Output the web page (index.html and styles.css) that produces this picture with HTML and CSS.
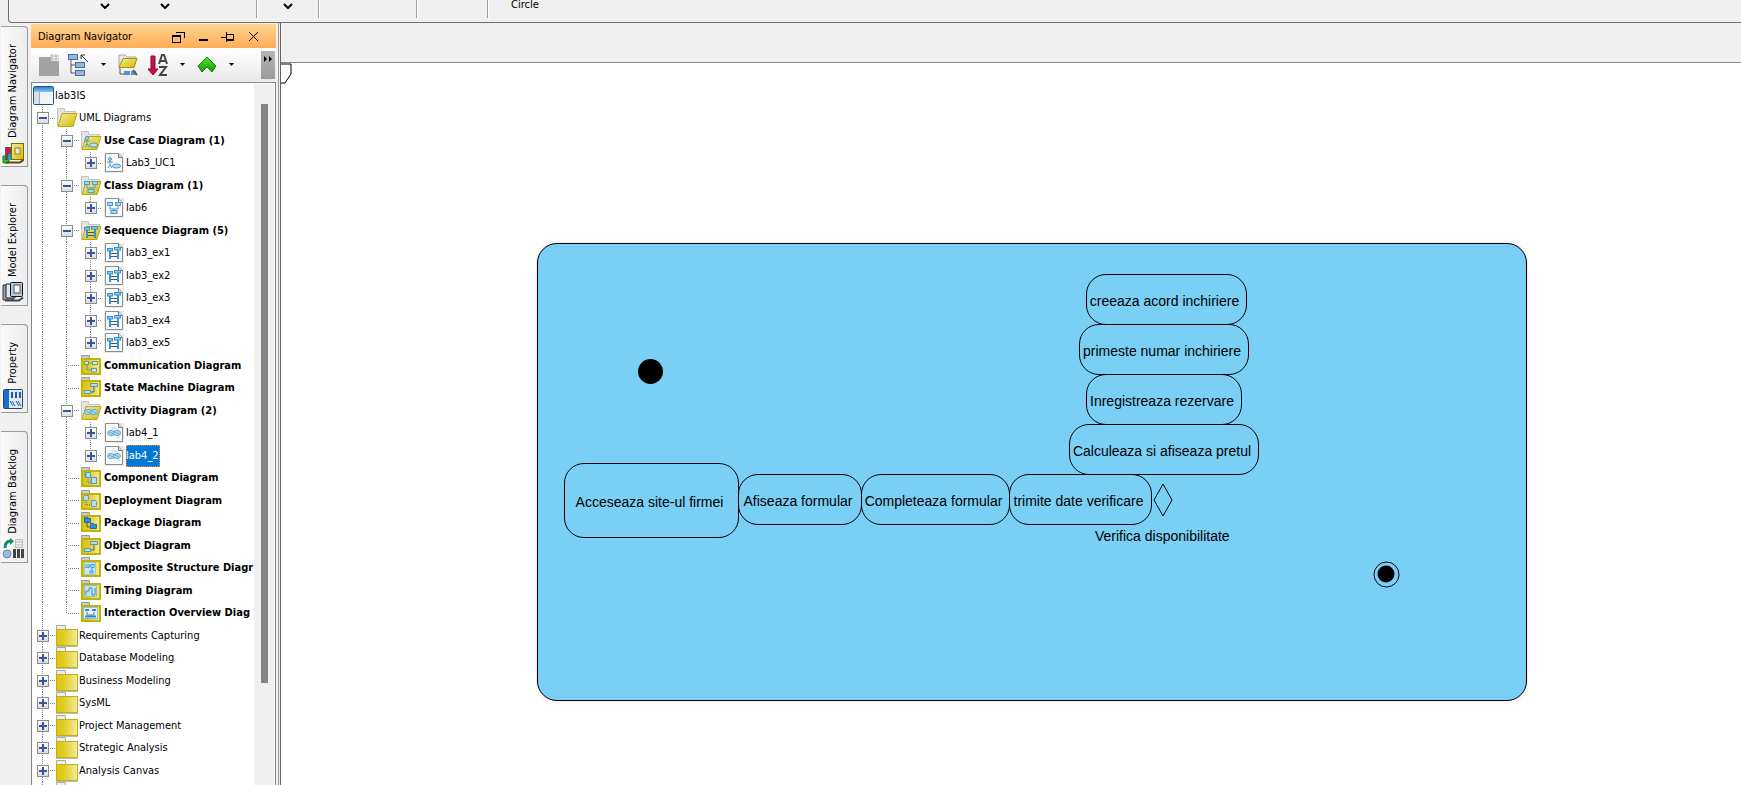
FILE: index.html
```html
<!DOCTYPE html>
<html lang="en">
<head>
<meta charset="utf-8">
<title>Diagram Navigator</title>
<link rel="stylesheet" href="styles.css">
</head>
<body>
<svg class="defs" aria-hidden="true">
  <defs>
    <linearGradient id="gold" x1="0" x2="1"><stop offset="0" stop-color="#dcc60f"/><stop offset=".35" stop-color="#e0cc22"/><stop offset="1" stop-color="#f3eaa0"/></linearGradient>
    <linearGradient id="gold2" x1="0" x2="1" y1="0" y2="1"><stop offset="0" stop-color="#f4eda0"/><stop offset="1" stop-color="#d2ba00"/></linearGradient>
    <linearGradient id="blue" x1="0" x2="0" y1="0" y2="1"><stop offset="0" stop-color="#2f7fd6"/><stop offset="1" stop-color="#8cc4f5"/></linearGradient>
    <linearGradient id="leaf" x1="0" x2="0" y1="0" y2="1"><stop offset="0" stop-color="#5be02c"/><stop offset="1" stop-color="#189a08"/></linearGradient>
    <symbol id="project" viewBox="0 0 24 22"><rect x="2.500" y="1.500" width="20" height="18" rx="1" fill="#fff" stroke="#1f567f"/><rect x="3" y="2" width="19" height="5" fill="url(#blue)"/><rect x="3" y="7" width="5" height="12" fill="#d5e2ea"/><path d="M8.500 7v12" stroke="#9ab"/><rect x="9" y="7" width="13" height="12" fill="#f1f3f5"/></symbol>
    <symbol id="closed" viewBox="0 0 24 22"><path d="M1.500 5V.500h9V4" fill="#eee" stroke="#aaa"/><rect x="1.500" y="4.500" width="21" height="16" fill="url(#gold)" stroke="#c0b010"/><path d="M1 21.500h22" stroke="#bbb"/></symbol>
    <symbol id="open" viewBox="0 0 24 22"><path d="M2.500 19V1.500h7v3h11V8" fill="#e4e4e4" stroke="#c4c4c4"/><path d="M7 6.500h15l-4 13H3z" fill="url(#gold2)" stroke="#b8a60c"/></symbol>
    <symbol id="sub" viewBox="0 0 24 22"><path d="M2.500 4V.500h8V4" fill="#ccc" stroke="#999"/><rect x="3" y="4" width="18" height="15" fill="url(#gold)" stroke="#c5b300" stroke-width="2"/></symbol>
    <symbol id="page" viewBox="0 0 24 22"><rect x="2" y="1" width="20" height="20" fill="#e9e9e9"/><path d="M3.500 1.500h13l4 4v14h-17z" fill="#f7f9fb" stroke="#8d8d8d"/><path d="M16.500 1.500v4h4" fill="#ddd" stroke="#777"/></symbol>
    <symbol id="usecase" viewBox="-5 -6 24 22"><g fill="#bfe0f3" stroke="#4899c8"><circle cx="3" cy="2" r="1.500"/><path d="M3 4v4M0 5h6M3 8l-2 3M3 8l2 3" fill="none"/><ellipse cx="9.500" cy="9" rx="4" ry="2"/></g></symbol>
    <symbol id="class" viewBox="-5 -6 24 22"><g fill="#a9d8f2" stroke="#4c9cca"><path d="M3 4v3h8V4M7 7v2" fill="none"/><rect x=".500" y=".500" width="5" height="3"/><rect x="8.500" y=".500" width="5" height="3"/><rect x="4" y="8.500" width="6" height="3"/></g></symbol>
    <symbol id="sequence" viewBox="-5 -6 24 22"><g fill="#8acbf0" stroke="#3893cd"><rect x=".500" y="1.500" width="5" height="2.500"/><rect x="7.500" y=".500" width="6" height="2.500"/><path d="M3 4v8M11 3v9" stroke-width="2"/><path d="M4 6.500h6M4 9.500h6" stroke="#456"/></g></symbol>
    <symbol id="activity" viewBox="-5 -6 24 22"><path d="M5 1h4l3 3M10 10h3" stroke="#ccc" fill="none"/><g fill="#b6dff4" stroke="#5aa7d2"><ellipse cx="4" cy="6" rx="3.500" ry="2.500"/><ellipse cx="10" cy="6" rx="3.500" ry="2.500"/><path d="M2 5l6 3M6 4l6 3"/></g></symbol>
    <symbol id="comm" viewBox="-5 -6 24 22"><g fill="#d9edc0" stroke="#5d9ca8"><path d="M3 3v6h5M5 2h4" fill="none"/><rect x=".500" y=".500" width="4" height="3"/><rect x="8.500" y=".500" width="5" height="3"/><rect x="7.500" y="7.500" width="5" height="3.500"/></g></symbol>
    <symbol id="link" viewBox="-5 -6 24 22"><g fill="#b9dceb" stroke="#5a9db9"><path d="M6 9h4V3" fill="none" stroke="#467"/><rect x="6.500" y=".500" width="7" height="3"/><rect x=".500" y="7.500" width="6" height="3"/></g></symbol>
    <symbol id="component" viewBox="-5 -6 24 22"><g fill="#b7e0f5" stroke="#4f9ccb"><path d="M4 6v4h4" fill="none"/><rect x="1.500" y="-.500" width="5" height="5"/><path d="M0 1h3M0 3h3M6 7h3M6 9h3"/><rect x="7.500" y="4.500" width="5" height="6"/></g></symbol>
    <symbol id="deployment" viewBox="-5 -6 24 22"><g fill="#b7def5" stroke="#5aa1c9"><path d="M-.500.500l1-1h4v4l-1 1h-4z"/><path d="M2 6v3h5" fill="none" stroke="#567" stroke-dasharray="1 1"/><path d="M7.500 4.500h4l1 1v5h-5z"/></g></symbol>
    <symbol id="package" viewBox="-5 -6 24 22"><path d="M3 5v4h5" stroke="#555" fill="none"/><g fill="#2f8fdc" stroke="#1b6cb4"><path d="M.500-.500h3v1h3v4h-6z"/><path d="M6.500 5.500h3v1h3v4h-6z"/></g></symbol>
    <symbol id="composite" viewBox="-5 -6 24 22"><g fill="#cbe7f6" stroke="#4c9fd0"><rect x=".500" y="-.500" width="11" height="12" stroke="#9ccbe2"/><rect x="2" y="2" width="3" height="2.500"/><rect x="7" y="1.500" width="3" height="3"/><rect x="6" y="8" width="3" height="2"/><path d="M5 3h2M8 5v3"/></g></symbol>
    <symbol id="timing" viewBox="-5 -6 24 22"><rect x=".500" y="-.500" width="12" height="11" fill="#c4e2f0" stroke="#88c0dc"/><path d="M2 9V5h3V2h3v7h3V2" fill="none" stroke="#3d8db8"/></symbol>
    <symbol id="overview" viewBox="-5 -6 24 22"><rect x="-.500" y="-.500" width="14" height="11" fill="#e6f4fb" stroke="#85c4e8"/><path d="M1 2h4M8 2h4M1 8.500h11" stroke="#2c8bd0" stroke-width="2"/><path d="M3 4v3h7V4" fill="none" stroke="#678"/></symbol>
  </defs>
</svg>

<header class="ribbon">
  <button class="drop first" aria-label="More shapes"><svg viewBox="0 0 10 6"><path d="M1 1l4 4 4-4"/></svg></button>
  <button class="drop second" aria-label="More connectors"><svg viewBox="0 0 10 6"><path d="M1 1l4 4 4-4"/></svg></button>
  <span class="rule"></span>
  <button class="drop third" aria-label="More styles"><svg viewBox="0 0 10 6"><path d="M1 1l4 4 4-4"/></svg></button>
  <span class="rule"></span>
  <span class="rule wide"></span>
  <span class="rule mid"></span>
  <button class="shape">Circle</button>
</header>

<div class="work">
  <nav class="rail">
    <button class="tab"><svg viewBox="0 0 22 22"><path d="M1 14h6v7H1z" fill="#35c53a" stroke="#167018"/><path d="M3 5h7v13H3z" fill="#555"/><path d="M4 6h4v6H4z" fill="#d11a4a"/><path d="M6 12h4v6H6z" fill="#1a9ad8"/><rect x="9.500" y="1.500" width="12" height="16" fill="url(#gold2)" stroke="#7d6b00"/><rect x="13" y="6" width="5" height="6" fill="#dfe6ee" stroke="#9a8800"/><path d="M4 20.500h14l4-3" stroke="#5c4c00" fill="none" stroke-width="2"/></svg><span>Diagram Navigator</span></button>
    <button class="tab"><svg viewBox="0 0 22 22"><path d="M1 4h10v15H1z" fill="#9aa3ac" stroke="#333"/><path d="M4 3h9v14H4z" fill="#dfe8f0" stroke="#222"/><rect x="8.500" y="1.500" width="12" height="14" rx="1" fill="#b6cbe0" stroke="#111"/><rect x="12" y="4" width="6" height="8" fill="#f6f6f6" stroke="#555"/><path d="M3 19.500h14l4-3" stroke="#444" fill="none" stroke-width="2"/></svg><span>Model Explorer</span></button>
    <button class="tab"><svg viewBox="0 0 22 22"><rect x="1.500" y="1.500" width="19" height="19" rx="1" fill="#dce9f6" stroke="#345"/><rect x="2" y="2" width="5" height="18" fill="#1670d2"/><path d="M10 4v6M14 4v6M18 4v6" stroke="#245a9a" stroke-width="2"/><path d="M8 13l3 5M10 13l3 5M14 13l3 5M16 13l3 5" stroke="#2a5a9a" fill="none"/></svg><span>Property</span></button>
    <button class="tab"><svg viewBox="0 0 22 22"><path d="M3 10c0-5 2-7 6-7" stroke="#168a60" fill="none" stroke-width="3"/><path d="M8 0l4 3-4 4z" fill="#168a60"/><circle cx="5" cy="16" r="4" fill="#9bbce0" stroke="#5f86b4"/><path d="M13.500 1.500h7v8h-7zM13 4h8M13 7h8" fill="#eee" stroke="#bbb"/><path d="M11 11h3v9h-3zM15 11h3v9h-3zM19 11h3v9h-3z" fill="#444"/></svg><span>Diagram Backlog</span></button>
  </nav>

  <aside class="panel">
    <div class="title">
      <h1>Diagram Navigator</h1>
      <button aria-label="Restore"><svg viewBox="0 0 14 12"><path d="M5 1h8v6M1 4h8v7H1z"/><path d="M1 5h8"/></svg></button>
      <button aria-label="Minimize"><svg viewBox="0 0 14 12"><path d="M3 9h9" stroke-width="2"/></svg></button>
      <button aria-label="Pin"><svg viewBox="0 0 14 12"><path d="M0 6h5M5 1v10M5 3h7v6H5M5 8h7"/></svg></button>
      <button aria-label="Close"><svg viewBox="0 0 14 12"><path class="thin" d="M3 1l9 9M12 1l-9 9"/></svg></button>
    </div>
    <div class="tools">
      <button class="tool" aria-label="New diagram"><svg viewBox="0 0 24 24"><path d="M2 4h12v4h8v15H2z" fill="#a2a2a2"/><path d="M13 3h9M13 6h9M15 1v8M19 1v8" stroke="#b5b5b5"/></svg></button>
      <button class="tool" aria-label="Collapse"><svg viewBox="0 0 24 24"><path d="M4 6v14h5M4 12h5" fill="none" stroke="#555"/><g fill="#8fb8e4" stroke="#4a6f9c"><rect x="1.500" y="1.500" width="9" height="5"/><rect x="8.500" y="9.500" width="9" height="5"/><rect x="8.500" y="17.500" width="9" height="5"/></g><path d="M21 9l-7-7M14 6V2h4" fill="none" stroke="#333"/></svg></button>
      <button class="arrow" aria-label="Collapse options"></button>
      <button class="tool" aria-label="Show folders"><svg viewBox="0 0 24 24"><path d="M3 14V2h6l2 2h9v3" fill="#e8e8e8" stroke="#aaa"/><path d="M7 5.500h14l-3 9H3z" fill="url(#gold2)" stroke="#a39106"/><path d="M4 15v6h5" stroke="#555" fill="none"/><path d="M8 18h6v4H8zM15 18h5v4h-5z" fill="#5d8fc4"/><path d="M17 17l4 5" stroke="#555" stroke-width="2"/></svg></button>
      <button class="tool" aria-label="Sort by name"><svg viewBox="0 0 24 24"><path d="M5 3h4v13h3l-5 6-5-6h3z" fill="#c90f46" stroke="#8d0a31"/><path d="M13 11l3-9h2l3 9M14 8h6M13 14h7l-6 8h7" fill="none" stroke="#444" stroke-width="2"/></svg></button>
      <button class="arrow" aria-label="Sort options"></button>
      <button class="tool" aria-label="Move up"><svg viewBox="0 0 24 24"><path d="M12 4l9 9-4 6-5-5-5 5-4-6z" fill="url(#leaf)" stroke="#168106"/></svg></button>
      <button class="arrow" aria-label="Move options"></button>
      <button class="more" aria-label="More tools"><svg viewBox="0 0 10 6"><path d="M1 0l3 3-3 3zM6 0l3 3-3 3z"/></svg></button>
    </div>
    <div class="tree-box">
      <ul class="tree">
        <li><svg class="ico"><use href="#project"/></svg><span>lab3IS</span></li>
        <li><i class="v x"><button class="minus" aria-label="Collapse"></button></i><svg class="ico"><use href="#open"/></svg><span>UML Diagrams</span></li>
        <li class="b"><i class="v"></i><i class="v x"><button class="minus" aria-label="Collapse"></button></i><svg class="ico"><use href="#open"/><use href="#usecase"/></svg><span>Use Case Diagram (1)</span></li>
        <li><i class="v"></i><i class="v"></i><i class="v x end"><button aria-label="Expand"></button></i><svg class="ico"><use href="#page"/><use class="on" href="#usecase"/></svg><span>Lab3_UC1</span></li>
        <li class="b"><i class="v"></i><i class="v x"><button class="minus" aria-label="Collapse"></button></i><svg class="ico"><use href="#open"/><use href="#class"/></svg><span>Class Diagram (1)</span></li>
        <li><i class="v"></i><i class="v"></i><i class="v x end"><button aria-label="Expand"></button></i><svg class="ico"><use href="#page"/><use class="on" href="#class"/></svg><span>lab6</span></li>
        <li class="b"><i class="v"></i><i class="v x"><button class="minus" aria-label="Collapse"></button></i><svg class="ico"><use href="#open"/><use href="#sequence"/></svg><span>Sequence Diagram (5)</span></li>
        <li><i class="v"></i><i class="v"></i><i class="v x"><button aria-label="Expand"></button></i><svg class="ico"><use href="#page"/><use class="on" href="#sequence"/></svg><span>lab3_ex1</span></li>
        <li><i class="v"></i><i class="v"></i><i class="v x"><button aria-label="Expand"></button></i><svg class="ico"><use href="#page"/><use class="on" href="#sequence"/></svg><span>lab3_ex2</span></li>
        <li><i class="v"></i><i class="v"></i><i class="v x"><button aria-label="Expand"></button></i><svg class="ico"><use href="#page"/><use class="on" href="#sequence"/></svg><span>lab3_ex3</span></li>
        <li><i class="v"></i><i class="v"></i><i class="v x"><button aria-label="Expand"></button></i><svg class="ico"><use href="#page"/><use class="on" href="#sequence"/></svg><span>lab3_ex4</span></li>
        <li><i class="v"></i><i class="v"></i><i class="v x end"><button aria-label="Expand"></button></i><svg class="ico"><use href="#page"/><use class="on" href="#sequence"/></svg><span>lab3_ex5</span></li>
        <li class="b"><i class="v"></i><i class="v h"></i><svg class="ico"><use href="#sub"/><use href="#comm"/></svg><span>Communication Diagram</span></li>
        <li class="b"><i class="v"></i><i class="v h"></i><svg class="ico"><use href="#sub"/><use href="#link"/></svg><span>State Machine Diagram</span></li>
        <li class="b"><i class="v"></i><i class="v x"><button class="minus" aria-label="Collapse"></button></i><svg class="ico"><use href="#open"/><use href="#activity"/></svg><span>Activity Diagram (2)</span></li>
        <li><i class="v"></i><i class="v"></i><i class="v x"><button aria-label="Expand"></button></i><svg class="ico"><use href="#page"/><use class="on" href="#activity"/></svg><span>lab4_1</span></li>
        <li><i class="v"></i><i class="v"></i><i class="v x end"><button aria-label="Expand"></button></i><svg class="ico"><use href="#page"/><use class="on" href="#activity"/></svg><span class="selected">lab4_2</span></li>
        <li class="b"><i class="v"></i><i class="v h"></i><svg class="ico"><use href="#sub"/><use href="#component"/></svg><span>Component Diagram</span></li>
        <li class="b"><i class="v"></i><i class="v h"></i><svg class="ico"><use href="#sub"/><use href="#deployment"/></svg><span>Deployment Diagram</span></li>
        <li class="b"><i class="v"></i><i class="v h"></i><svg class="ico"><use href="#sub"/><use href="#package"/></svg><span>Package Diagram</span></li>
        <li class="b"><i class="v"></i><i class="v h"></i><svg class="ico"><use href="#sub"/><use href="#link"/></svg><span>Object Diagram</span></li>
        <li class="b"><i class="v"></i><i class="v h"></i><svg class="ico"><use href="#sub"/><use href="#composite"/></svg><span>Composite Structure Diagr</span></li>
        <li class="b"><i class="v"></i><i class="v h"></i><svg class="ico"><use href="#sub"/><use href="#timing"/></svg><span>Timing Diagram</span></li>
        <li class="b"><i class="v"></i><i class="v h end"></i><svg class="ico"><use href="#sub"/><use href="#overview"/></svg><span>Interaction Overview Diag</span></li>
        <li><i class="v x"><button aria-label="Expand"></button></i><svg class="ico"><use href="#closed"/></svg><span>Requirements Capturing</span></li>
        <li><i class="v x"><button aria-label="Expand"></button></i><svg class="ico"><use href="#closed"/></svg><span>Database Modeling</span></li>
        <li><i class="v x"><button aria-label="Expand"></button></i><svg class="ico"><use href="#closed"/></svg><span>Business Modeling</span></li>
        <li><i class="v x"><button aria-label="Expand"></button></i><svg class="ico"><use href="#closed"/></svg><span>SysML</span></li>
        <li><i class="v x"><button aria-label="Expand"></button></i><svg class="ico"><use href="#closed"/></svg><span>Project Management</span></li>
        <li><i class="v x"><button aria-label="Expand"></button></i><svg class="ico"><use href="#closed"/></svg><span>Strategic Analysis</span></li>
        <li><i class="v x"><button aria-label="Expand"></button></i><svg class="ico"><use href="#closed"/></svg><span>Analysis Canvas</span></li>
        <li><i class="v"></i><svg class="ico"><use href="#closed"/></svg></li>
      </ul>
      <div class="track"><div class="thumb"></div></div>
    </div>
  </aside>
  <div class="splitter"></div>

  <main class="editor">
    <div class="crumbs"></div>
    <div class="canvas">
      <svg class="corner" viewBox="0 0 12 22"><path d="M0 1h10v10l-6 9H0"/></svg>
      <div class="activity"></div>
      <div class="dot"></div>
      <div class="action a1">Acceseaza site-ul firmei</div>
      <div class="action a2">Afiseaza formular</div>
      <div class="action a3">Completeaza formular</div>
      <div class="action a4">trimite date verificare</div>
      <div class="action a5">Calculeaza si afiseaza pretul</div>
      <div class="action a6">Inregistreaza rezervare</div>
      <div class="action a7">primeste numar inchiriere</div>
      <div class="action a8">creeaza acord inchiriere</div>
      <svg class="decision" viewBox="0 0 20 34"><path d="M10 1l9 16-9 16-9-16z"/></svg>
      <div class="caption">Verifica disponibilitate</div>
      <svg class="final" viewBox="0 0 27 27"><circle cx="13.500" cy="13.500" r="12.500" fill="none" stroke="#000"/><circle cx="13" cy="13" r="8.500"/></svg>
    </div>
  </main>
</div>
</body>
</html>
```
FILE: styles.css
```css
* { box-sizing: border-box; }

html, body { height: 100%; }

body {
  margin: 0;
  display: flex;
  flex-direction: column;
  overflow: hidden;
  background: #f0f0f0;
  color: #000;
  font: 11px/14px "DejaVu Sans Condensed", "Noto Sans", sans-serif;
}

button {
  margin: 0;
  padding: 0;
  border: 0;
  background: none;
  color: inherit;
  font: inherit;
}

.defs { position: absolute; width: 0; height: 0; }

/* Ribbon */
.ribbon {
  flex: none;
  display: flex;
  align-items: flex-start;
  height: 23px;
  margin-left: 8px;
  border: 1px solid #6e6e6e;
  border-width: 0 0 1px 1px;
  border-bottom-left-radius: 4px;
}
.drop { width: 10px; height: 10px; }
.drop svg { display: block; width: 10px; height: 6px; margin-top: 2px; fill: none; stroke: #000; stroke-width: 2; }
.first { margin-left: 91px; }
.second { margin: 0 86px 0 50px; }
.third { margin: 0 25px; }
.rule { width: 2px; height: 18px; border-left: 1px solid #a0a0a0; border-right: 1px solid #fff; }
.wide { margin-left: 96px; }
.mid { margin: 0 22px 0 69px; }
.shape { height: 14px; margin-top: -2px; }

.work { flex: 1; display: flex; min-height: 0; }

/* Side tabs */
.rail { width: 31px; flex: none; display: flex; flex-direction: column; align-items: flex-start; gap: 18px; padding: 3px 0 0 1px; }
.tab {
  width: 27px;
  display: flex;
  flex-direction: column-reverse;
  align-items: center;
  gap: 4px;
  padding: 17px 3px 2px 0;
  border: 1px solid #999;
  border-left: 0;
  border-top-right-radius: 4px;
  background: linear-gradient(90deg, #fafafa, #ececec);
}
.tab svg { width: 22px; height: 22px; }
.tab span { writing-mode: vertical-rl; transform: rotate(180deg); white-space: nowrap; }

/* Navigator panel */
.panel { width: 245px; flex: none; display: flex; flex-direction: column; padding-top: 1px; }
.title { display: flex; align-items: center; height: 24px; padding: 2px 16px 0 7px; gap: 11px; background: linear-gradient(#ffd38f, #ffad57); }
.title h1 { flex: 1; margin: 0; font: inherit; }
.title button { width: 14px; height: 12px; }
.title svg { display: block; width: 14px; height: 12px; fill: none; stroke: #000; stroke-width: 1; shape-rendering: crispEdges; }
.title .thin { shape-rendering: auto; }

.tools { display: flex; align-items: center; height: 33px; padding: 0 0 0 6px; background: linear-gradient(#fff, #e9e9e9); }
.tool { width: 24px; height: 24px; margin-right: 6px; }
.tool svg { display: block; width: 24px; height: 24px; }
.arrow { width: 5px; height: 3px; margin: 0 10px 0 4px; background: #000; clip-path: polygon(0 0, 100% 0, 50% 100%); }
.more { align-self: stretch; width: 14px; margin: 3px 1px 2px auto; padding-top: 3px; background: linear-gradient(#b4b4b4, #9c9c9c); }
.more svg { display: block; width: 10px; height: 6px; margin: 0 2px 16px; }

.tree-box {
  flex: 1;
  min-height: 0;
  display: flex;
  overflow: hidden;
  margin-top: 1px;
  padding: 2px 2px 0 0;
  background: #fff;
  box-shadow: inset 0 1px #828790, inset 1px 0 #828790, inset -1px 0 #828790;
}
.tree {
  flex: 1;
  min-width: 0;
  overflow: hidden;
  display: grid;
  grid-auto-rows: 23px 22px;
  align-content: start;
  margin: 0;
  padding: 0;
  list-style: none;
}
.tree li { display: flex; align-items: center; min-width: 0; white-space: nowrap; }
.ico { width: 24px; height: 22px; flex: none; }
.on { transform: translate(0, -1px); }
.b { font-weight: bold; }
.b .ico { margin-right: 1px; }

/* Guide lines and expanders */
.tree i { width: 24px; flex: none; align-self: stretch; display: flex; align-items: center; }
.tree i:nth-of-type(3) { width: 23px; }
.v { background: linear-gradient(#808080 1px, transparent 1px) 11px 0 / 1px 2px repeat-y; }
.end {
  background:
    linear-gradient(#fff, #fff) bottom / 100% 50% no-repeat,
    linear-gradient(#808080 1px, transparent 1px) 11px 0 / 1px 2px repeat-y;
}
.x { padding-left: 6px; }
.h { padding-left: 12px; }
.x::after, .h::after { content: ""; flex: 1; height: 1px; margin-left: 1px; background: linear-gradient(90deg, #808080 1px, transparent 1px) 0 0 / 2px 1px repeat-x; }
.x button {
  width: 12px;
  height: 12px;
  border: 1px solid #8c8c8c;
  background:
    linear-gradient(#3a559f, #3a559f) center / 8px 2px no-repeat,
    linear-gradient(#3a559f, #3a559f) center / 2px 8px no-repeat,
    linear-gradient(#fff, #dcdcdc);
}
.x .minus {
  background:
    linear-gradient(#3a559f, #3a559f) center / 8px 2px no-repeat,
    linear-gradient(#fff, #dcdcdc);
}
.selected { padding: 4px 1px 4px 0; background: #0078d7; color: #fff; outline: 1px dotted #ff8728; outline-offset: -1px; }

.track { width: 20px; flex: none; padding: 20px 6px 0 7px; background: #f0f0f0; }
.thumb { height: 579px; background: #858585; }

.splitter { width: 5px; flex: none; border-right: 1px solid #646464; background: linear-gradient(#999, #999) 2px 0 / 1px 100% no-repeat; }

/* Editor */
.editor { flex: 1; min-width: 0; display: flex; flex-direction: column; }
.crumbs { height: 40px; border-bottom: 1px solid #7f898d; }
.canvas { position: relative; flex: 1; background: #fff; font: 14px/16px "Liberation Sans", Arial, sans-serif; }
.canvas > * { position: absolute; }
.corner { left: 0; top: 0; width: 12px; height: 22px; fill: none; stroke: #000; }
.activity { left: 256px; top: 180px; width: 990px; height: 458px; border: 1px solid #000; border-radius: 20px; background: #7acff5; box-shadow: 0 0 2px #bbb; }
.dot { left: 357px; top: 296px; width: 25px; height: 25px; border-radius: 50%; background: #000; }
.action {
  display: flex;
  align-items: center;
  justify-content: center;
  height: 51px;
  padding: 2px 4px 0 0;
  border: 1px solid #000;
  border-radius: 20px;
  white-space: nowrap;
}
.a1 { left: 283px; top: 400px; width: 175px; height: 75px; }
.a2 { left: 457px; top: 411px; width: 124px; }
.a3 { left: 580px; top: 411px; width: 149px; }
.a4 { left: 728px; top: 411px; width: 143px; }
.a5 { left: 788px; top: 361px; width: 190px; }
.a6 { left: 805px; top: 311px; width: 156px; }
.a7 { left: 798px; top: 261px; width: 170px; }
.a8 { left: 805px; top: 211px; width: 161px; }
.decision { left: 872px; top: 420px; width: 20px; height: 34px; fill: none; stroke: #000; stroke-width: 1; }
.caption { left: 814px; top: 465px; white-space: nowrap; }
.final { left: 1092px; top: 498px; width: 27px; height: 27px; }
```
